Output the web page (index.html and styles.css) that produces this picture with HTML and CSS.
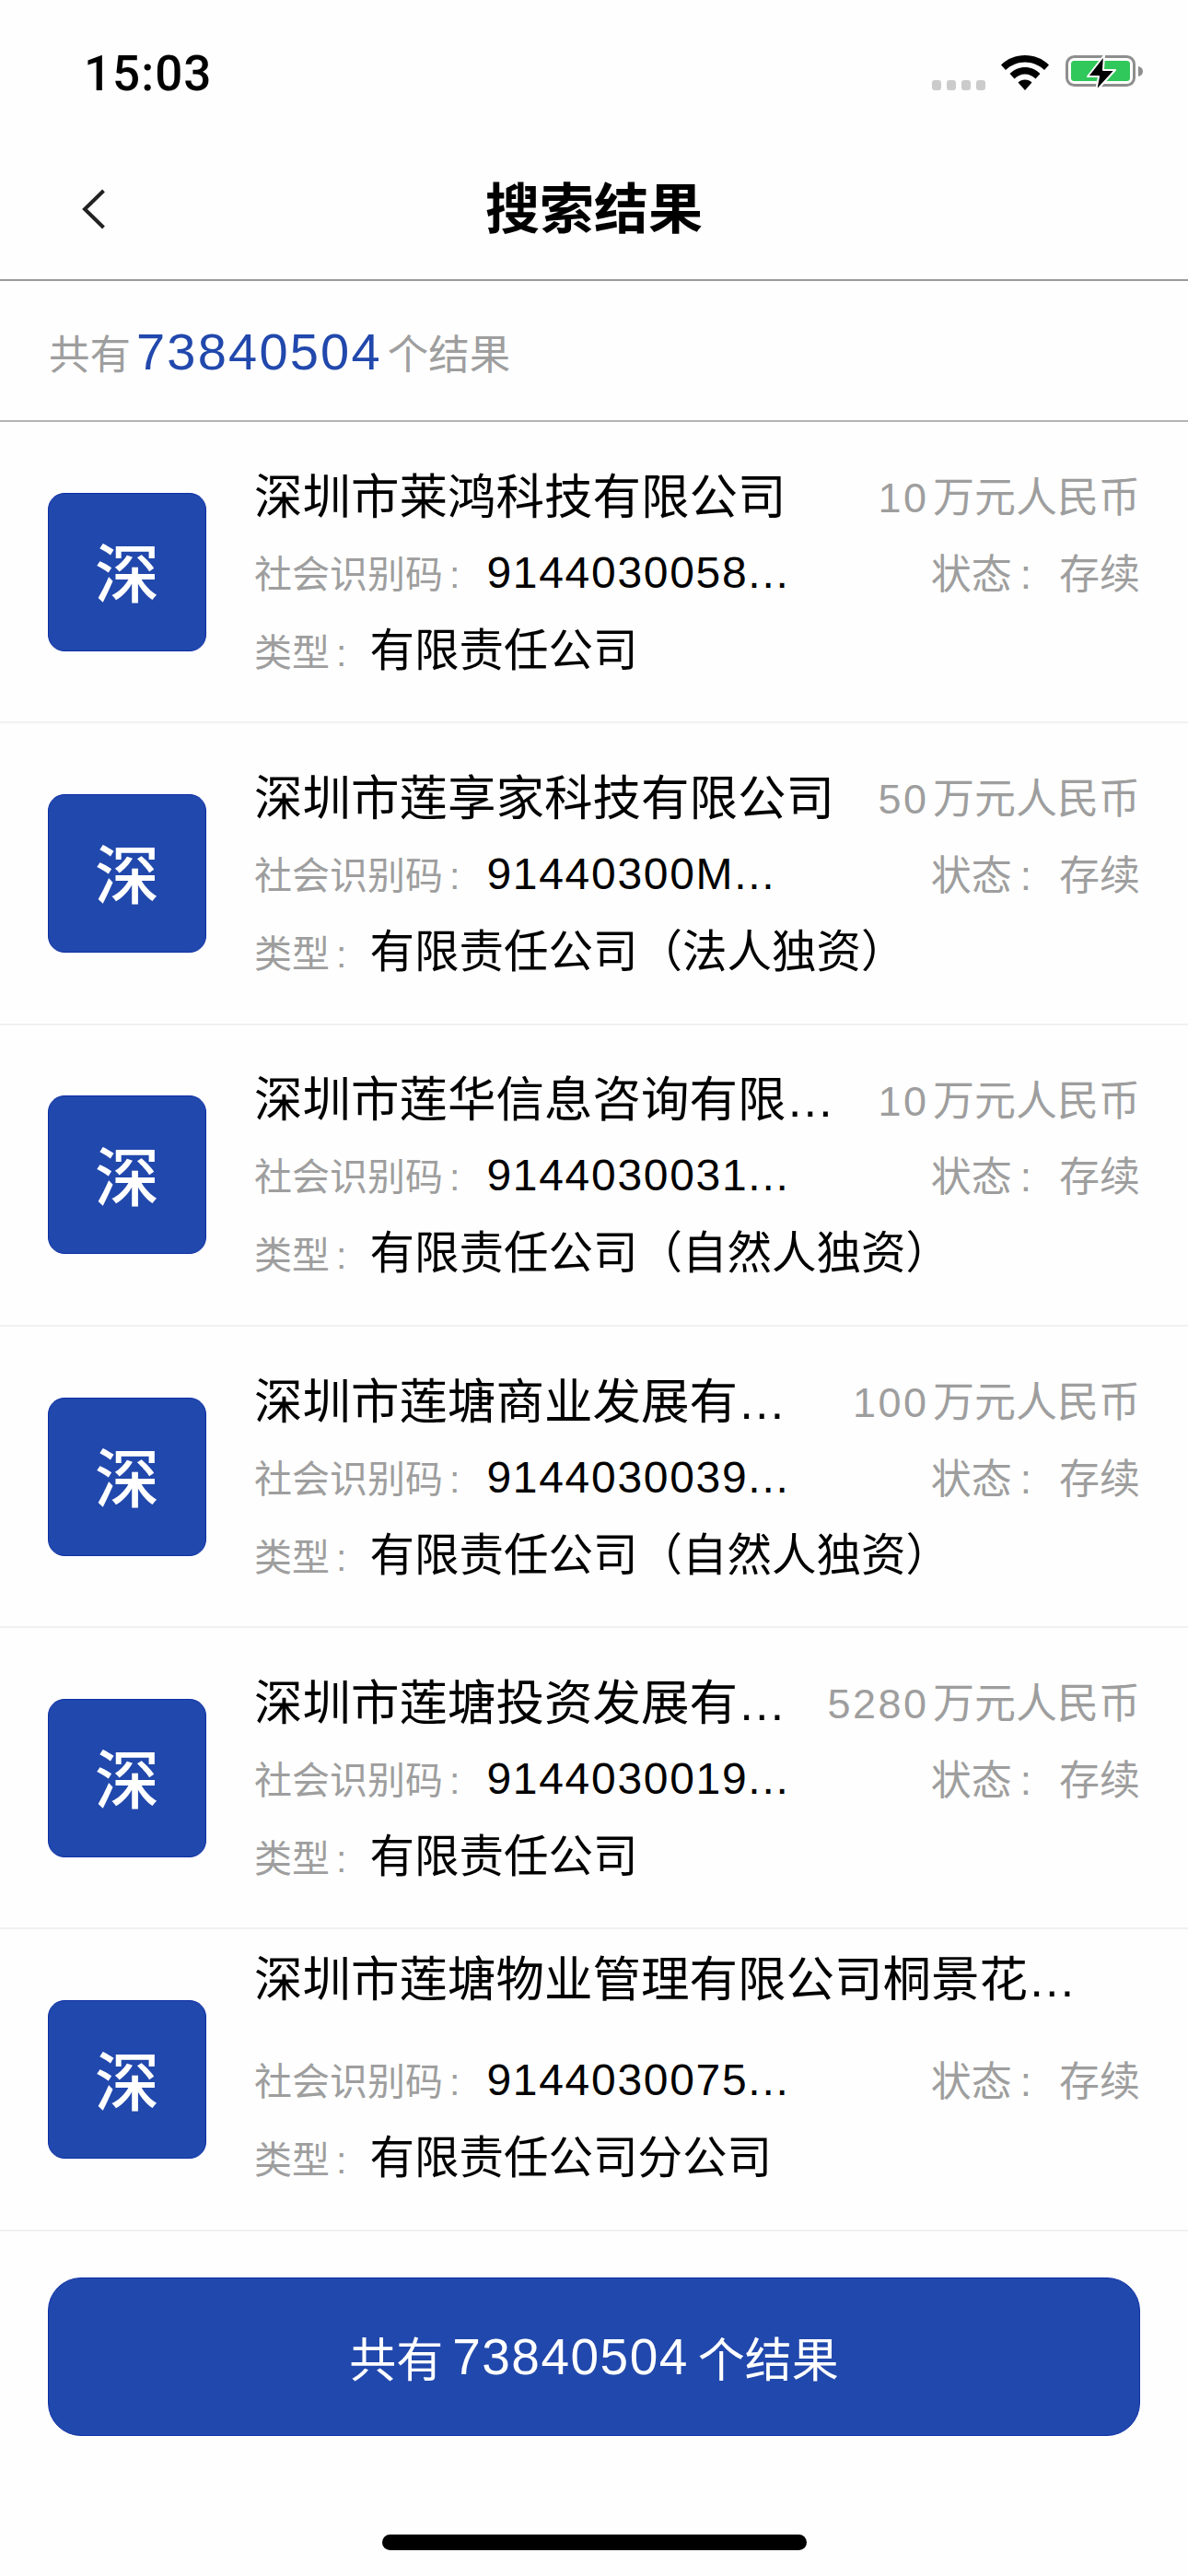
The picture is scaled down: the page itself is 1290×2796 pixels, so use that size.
FILE: index.html
```html
<!DOCTYPE html>
<html lang="zh-CN">
<head>
  <meta charset="UTF-8" />
  <meta name="viewport" content="width=device-width, initial-scale=1.0"/>
  <title>搜索结果</title>
  <link rel="stylesheet" href="styles.css">
</head>
<body>

  <div class="status-bar">
    <span class="time">15:03</span>
    <div class="status-icons">
      <div class="signal"><i></i><i></i><i></i><i></i></div>
      <svg class="wifi" width="52" height="39" viewBox="0 0 52 39">
        <path d="M0 11.500C7 4.500 16 1 26 1s19 3.500 26 10.500l-5 5.500C41 11.500 34 8.500 26 8.500S11 11.500 5 17z"/>
        <path d="M9.500 21C14 16.500 20 14 26 14s12 2.500 16.500 7l-5 5.500C34.500 23.500 30.500 21.500 26 21.500s-8.500 2-11.500 5z"/>
        <path d="M18.500 30.500c2-2 4.500-3 7.500-3s5.500 1 7.500 3L26 39z"/>
      </svg>
      <svg class="battery" width="84" height="41" viewBox="0 0 84 41">
        <rect x="1.500" y="2.500" width="73" height="31" rx="8" fill="none" stroke="#8e8e8e" stroke-width="3"/>
        <rect x="6" y="7" width="64" height="22" rx="3.500" fill="#30c85a"/>
        <path d="M79 13c3 .5 5 2.500 5 5.500s-2 5-5 5.500z" fill="#8e8e8e"/>
        <path d="M42 1 24 24h12l-3 16 21-23H41z" fill="#000" stroke="#fff" stroke-width="2" stroke-linejoin="round"/>
      </svg>
    </div>
  </div>

  <header class="nav">
    <svg class="back" width="26" height="44" viewBox="0 0 26 44">
      <path d="M23.500 2 3 22l20.500 20" fill="none" stroke="#222" stroke-width="4"/>
    </svg>
    <h1>搜索结果</h1>
  </header>

  <div class="count"><span>共有</span><span class="count-num">73840504</span><span>个结果</span></div>

  <main class="list">
    <div class="row">
      <div class="avatar">深</div>
      <div class="info">
        <div class="line line-top"><span class="name">深圳市莱鸿科技有限公司</span><span class="side"><span class="amt">10</span> 万元人民币</span></div>
        <div class="line"><span><span class="label">社会识别码<span class="colon">:</span></span><span class="code">9144030058...</span></span><span class="side status">状态<span class="colon">:</span>存续</span></div>
        <div class="line"><span><span class="label">类型<span class="colon">:</span></span><span class="value">有限责任公司</span></span></div>
      </div>
    </div>

    <div class="row">
      <div class="avatar">深</div>
      <div class="info">
        <div class="line line-top"><span class="name">深圳市莲享家科技有限公司</span><span class="side"><span class="amt">50</span> 万元人民币</span></div>
        <div class="line"><span><span class="label">社会识别码<span class="colon">:</span></span><span class="code">91440300M...</span></span><span class="side status">状态<span class="colon">:</span>存续</span></div>
        <div class="line"><span><span class="label">类型<span class="colon">:</span></span><span class="value">有限责任公司（法人独资）</span></span></div>
      </div>
    </div>

    <div class="row">
      <div class="avatar">深</div>
      <div class="info">
        <div class="line line-top"><span class="name">深圳市莲华信息咨询有限…</span><span class="side"><span class="amt">10</span> 万元人民币</span></div>
        <div class="line"><span><span class="label">社会识别码<span class="colon">:</span></span><span class="code">9144030031...</span></span><span class="side status">状态<span class="colon">:</span>存续</span></div>
        <div class="line"><span><span class="label">类型<span class="colon">:</span></span><span class="value">有限责任公司（自然人独资）</span></span></div>
      </div>
    </div>

    <div class="row">
      <div class="avatar">深</div>
      <div class="info">
        <div class="line line-top"><span class="name">深圳市莲塘商业发展有…</span><span class="side"><span class="amt">100</span> 万元人民币</span></div>
        <div class="line"><span><span class="label">社会识别码<span class="colon">:</span></span><span class="code">9144030039...</span></span><span class="side status">状态<span class="colon">:</span>存续</span></div>
        <div class="line"><span><span class="label">类型<span class="colon">:</span></span><span class="value">有限责任公司（自然人独资）</span></span></div>
      </div>
    </div>

    <div class="row">
      <div class="avatar">深</div>
      <div class="info">
        <div class="line line-top"><span class="name">深圳市莲塘投资发展有…</span><span class="side"><span class="amt">5280</span> 万元人民币</span></div>
        <div class="line"><span><span class="label">社会识别码<span class="colon">:</span></span><span class="code">9144030019...</span></span><span class="side status">状态<span class="colon">:</span>存续</span></div>
        <div class="line"><span><span class="label">类型<span class="colon">:</span></span><span class="value">有限责任公司</span></span></div>
      </div>
    </div>

    <div class="row">
      <div class="avatar">深</div>
      <div class="info">
        <div class="line line-top line-raised"><span class="name">深圳市莲塘物业管理有限公司桐景花…</span></div>
        <div class="line"><span><span class="label">社会识别码<span class="colon">:</span></span><span class="code">9144030075...</span></span><span class="side status">状态<span class="colon">:</span>存续</span></div>
        <div class="line"><span><span class="label">类型<span class="colon">:</span></span><span class="value">有限责任公司分公司</span></span></div>
      </div>
    </div>
  </main>

  <footer class="footer">
    <button class="total-btn"><span>共有</span><span class="btn-num">73840504</span><span>个结果</span></button>
    <div class="home-bar"></div>
  </footer>

</body>
</html>
```

FILE: styles.css
```css
:root {
  --primary: #2148ac;
  --primary-edge: #0d2fa6;
  --text-dark: #000;
  --text-grey: #9e9e9e;
  --cjk: "Liberation Sans", "Noto Sans CJK SC", sans-serif;
}

* {
  box-sizing: border-box;
}

body {
  margin: 0;
  width: 1290px;
  height: 2796px;
  overflow: hidden;
  background: #fefefe;
  color: var(--text-dark);
  font-family: var(--cjk);
}

.status-bar {
  height: 130px;
  padding: 53px 49px 0 91px;
  display: flex;
  justify-content: space-between;
  align-items: flex-start;
}

.time {
  font-family: Roboto, sans-serif;
  font-size: 53px;
  line-height: 54px;
  font-weight: 500;
  letter-spacing: 1px;
}

.status-icons {
  display: flex;
  align-items: flex-start;
  margin-top: 6px;
}

.signal {
  display: flex;
  gap: 6px;
  margin-top: 28px;
  margin-right: 17px;
}

.signal i {
  width: 10px;
  height: 11px;
  border-radius: 3px;
  background: #cbcbcb;
}

.battery {
  margin-left: 18px;
}

.nav {
  height: 175px;
  padding-left: 89px;
  border-bottom: 2px solid #9a9a9a;
  display: flex;
  align-items: center;
  position: relative;
}

.back {
  margin-top: 20px;
}

.nav h1 {
  position: absolute;
  left: 0;
  right: 0;
  top: 60px;
  margin: 0;
  text-align: center;
  font-size: 59px;
  line-height: 76px;
  font-weight: 700;
}

.count {
  height: 153px;
  padding: 2px 0 0 53px;
  border-bottom: 2px solid #b4b4b4;
  display: flex;
  align-items: center;
  gap: 6px;
  font-size: 44.500px;
  color: var(--text-grey);
}

.count-num {
  font-size: 56px;
  color: var(--primary);
  letter-spacing: 2.200px;
}

.row {
  height: 327.300px;
  padding: 0 52px;
  border-bottom: 2px solid #f1f1f1;
  display: flex;
  align-items: center;
  gap: 52px;
}

.avatar {
  flex: none;
  width: 172px;
  height: 172px;
  padding-bottom: 4px;
  background: var(--primary);
  border: 1px solid var(--primary-edge);
  border-radius: 18px;
  color: #fff;
  font-size: 70px;
  font-weight: 500;
  display: flex;
  align-items: center;
  justify-content: center;
}

.info {
  flex: 1;
  min-width: 0;
  margin-top: -2px;
}

.line {
  height: 82px;
  display: flex;
  justify-content: space-between;
  align-items: center;
  white-space: nowrap;
}

.line-top .side {
  margin-top: -2px;
}

.line-raised {
  align-items: flex-start;
}

.name {
  font-size: 52.500px;
  line-height: 62px;
  margin-top: 4px;
}

.line-raised .name {
  margin-top: -15px;
}

.label {
  font-size: 41px;
  color: var(--text-grey);
}

.colon {
  margin: 0 25px 0 7px;
}

.code {
  font-size: 48px;
  letter-spacing: 1.700px;
  margin-left: 4px;
}

.value {
  font-size: 48.500px;
}

.side {
  font-size: 45px;
  word-spacing: -8px;
  color: var(--text-grey);
}

.amt {
  letter-spacing: 2.500px;
}

.status {
  font-size: 44px;
}

.status .colon {
  margin: 0 30px 0 9px;
}

.footer {
  padding: 50px 52px 0;
  display: flex;
  flex-direction: column;
  align-items: center;
}

.total-btn {
  width: 100%;
  height: 172px;
  background: var(--primary);
  border: 1px solid var(--primary-edge);
  border-radius: 36px;
  color: #fff;
  font-family: var(--cjk);
  font-size: 51px;
  display: flex;
  align-items: center;
  justify-content: center;
  gap: 10px;
}

.btn-num {
  font-size: 55px;
  letter-spacing: 1.500px;
}

.home-bar {
  width: 461px;
  height: 17px;
  margin-top: 107px;
  border-radius: 9px;
  background: #000;
}
```
